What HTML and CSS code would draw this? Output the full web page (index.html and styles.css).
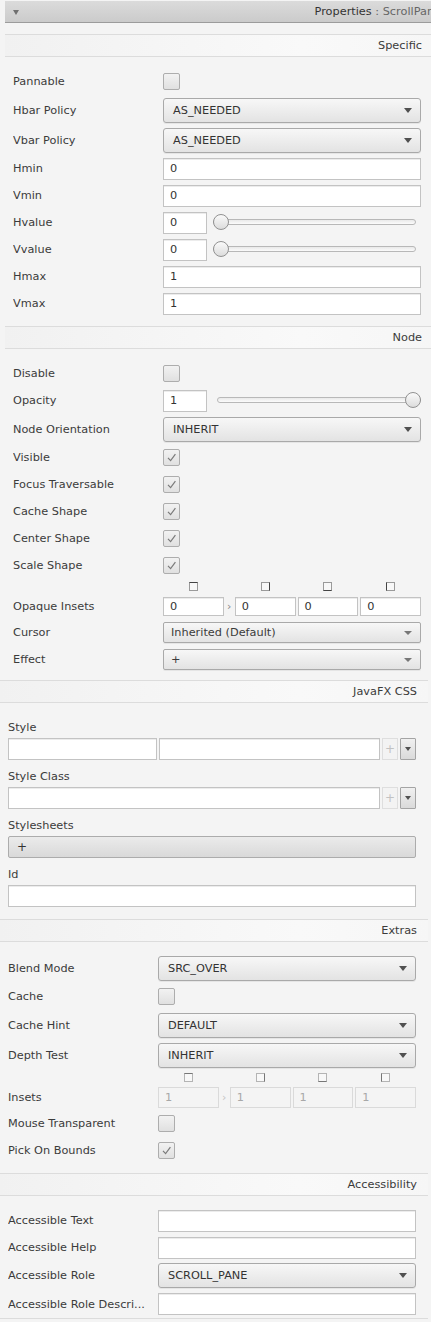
FILE: index.html
```html
<!DOCTYPE html>
<html>
<head>
<meta charset="utf-8">
<title>Properties</title>
<link rel="stylesheet" href="styles.css">
</head>
<body>
<div class="titlebar">
  <span class="tri"></span>
  <span class="title"><span class="t1">Properties</span><span class="t2"> : ScrollPane</span></span>
</div>

<div class="group g1">
  <div class="sec-head">Specific</div>
  <div class="sec-body specific">
    <div class="row h27"><span class="lbl">Pannable</span><span class="val"><span class="cb"></span></span></div>
    <div class="row h30"><span class="lbl">Hbar Policy</span><span class="val"><span class="combo">AS_NEEDED<span class="arrow"></span></span></span></div>
    <div class="row h30"><span class="lbl">Vbar Policy</span><span class="val"><span class="combo">AS_NEEDED<span class="arrow"></span></span></span></div>
    <div class="row h27"><span class="lbl">Hmin</span><span class="val"><span class="field">0</span></span></div>
    <div class="row h27"><span class="lbl">Vmin</span><span class="val"><span class="field">0</span></span></div>
    <div class="row h27"><span class="lbl">Hvalue</span><span class="val"><span class="field small">0</span><span class="slider min"><span class="track"></span><span class="thumb"></span></span></span></div>
    <div class="row h27"><span class="lbl">Vvalue</span><span class="val"><span class="field small">0</span><span class="slider min"><span class="track"></span><span class="thumb"></span></span></span></div>
    <div class="row h27"><span class="lbl">Hmax</span><span class="val"><span class="field">1</span></span></div>
    <div class="row h27"><span class="lbl">Vmax</span><span class="val"><span class="field">1</span></span></div>
  </div>

  <div class="sec-head">Node</div>
  <div class="sec-body node">
    <div class="row h27"><span class="lbl">Disable</span><span class="val"><span class="cb"></span></span></div>
    <div class="row h27"><span class="lbl">Opacity</span><span class="val"><span class="field small">1</span><span class="slider max"><span class="track"></span><span class="thumb"></span></span></span></div>
    <div class="row h30"><span class="lbl">Node Orientation</span><span class="val"><span class="combo">INHERIT<span class="arrow"></span></span></span></div>
    <div class="row h27"><span class="lbl">Visible</span><span class="val"><span class="cb checked"><svg viewBox="0 0 17 17" width="17" height="17"><path d="M5 8.8 L7.6 11.6 L12.4 5.2" fill="none" stroke="#7a7a7a" stroke-width="1.2"/></svg></span></span></div>
    <div class="row h27"><span class="lbl">Focus Traversable</span><span class="val"><span class="cb checked"><svg viewBox="0 0 17 17" width="17" height="17"><path d="M5 8.8 L7.6 11.6 L12.4 5.2" fill="none" stroke="#7a7a7a" stroke-width="1.2"/></svg></span></span></div>
    <div class="row h27"><span class="lbl">Cache Shape</span><span class="val"><span class="cb checked"><svg viewBox="0 0 17 17" width="17" height="17"><path d="M5 8.8 L7.6 11.6 L12.4 5.2" fill="none" stroke="#7a7a7a" stroke-width="1.2"/></svg></span></span></div>
    <div class="row h27"><span class="lbl">Center Shape</span><span class="val"><span class="cb checked"><svg viewBox="0 0 17 17" width="17" height="17"><path d="M5 8.8 L7.6 11.6 L12.4 5.2" fill="none" stroke="#7a7a7a" stroke-width="1.2"/></svg></span></span></div>
    <div class="row h27"><span class="lbl">Scale Shape</span><span class="val"><span class="cb checked"><svg viewBox="0 0 17 17" width="17" height="17"><path d="M5 8.8 L7.6 11.6 L12.4 5.2" fill="none" stroke="#7a7a7a" stroke-width="1.2"/></svg></span></span></div>
    <div class="row h14"><span class="lbl"></span><span class="val insets">
      <span class="cell"><span class="ico top"></span></span><span class="sep"></span>
      <span class="cell"><span class="ico right"></span></span><span class="gap"></span>
      <span class="cell"><span class="ico bottom"></span></span><span class="gap"></span>
      <span class="cell"><span class="ico left"></span></span>
    </span></div>
    <div class="row h26"><span class="lbl">Opaque Insets</span><span class="val insets">
      <span class="cell"><span class="field ins">0</span></span><span class="sep">›</span>
      <span class="cell"><span class="field ins">0</span></span><span class="gap"></span>
      <span class="cell"><span class="field ins">0</span></span><span class="gap"></span>
      <span class="cell"><span class="field ins">0</span></span>
    </span></div>
    <div class="row h27"><span class="lbl">Cursor</span><span class="val"><span class="combo slim">Inherited (Default)<span class="arrow light"></span></span></span></div>
    <div class="row h27"><span class="lbl">Effect</span><span class="val"><span class="combo slim">+<span class="arrow light"></span></span></span></div>
  </div>
</div>

<div class="group g2">
  <div class="sec-head">JavaFX CSS</div>
  <div class="sec-body css">
    <div class="blk">
      <div class="blbl">Style</div>
      <div class="brow"><span class="field w148"></span><span class="field grow"></span><span class="plus">+</span><span class="drop"><span class="arrow"></span></span></div>
    </div>
    <div class="blk">
      <div class="blbl">Style Class</div>
      <div class="brow"><span class="field grow"></span><span class="plus">+</span><span class="drop"><span class="arrow"></span></span></div>
    </div>
    <div class="blk">
      <div class="blbl">Stylesheets</div>
      <div class="brow"><span class="btn">+</span></div>
    </div>
    <div class="blk">
      <div class="blbl">Id</div>
      <div class="brow"><span class="field grow"></span></div>
    </div>
  </div>

  <div class="sec-head">Extras</div>
  <div class="sec-body extras">
    <div class="row h30"><span class="lbl">Blend Mode</span><span class="val"><span class="combo">SRC_OVER<span class="arrow"></span></span></span></div>
    <div class="row h27"><span class="lbl">Cache</span><span class="val"><span class="cb"></span></span></div>
    <div class="row h30"><span class="lbl">Cache Hint</span><span class="val"><span class="combo">DEFAULT<span class="arrow"></span></span></span></div>
    <div class="row h30"><span class="lbl">Depth Test</span><span class="val"><span class="combo">INHERIT<span class="arrow"></span></span></span></div>
    <div class="row h14"><span class="lbl"></span><span class="val insets">
      <span class="cell"><span class="ico top dim"></span></span><span class="sep"></span>
      <span class="cell"><span class="ico right dim"></span></span><span class="gap"></span>
      <span class="cell"><span class="ico bottom dim"></span></span><span class="gap"></span>
      <span class="cell"><span class="ico left dim"></span></span>
    </span></div>
    <div class="row h26"><span class="lbl">Insets</span><span class="val insets">
      <span class="cell"><span class="field ins dis">1</span></span><span class="sep dim">›</span>
      <span class="cell"><span class="field ins dis">1</span></span><span class="gap"></span>
      <span class="cell"><span class="field ins dis">1</span></span><span class="gap"></span>
      <span class="cell"><span class="field ins dis">1</span></span>
    </span></div>
    <div class="row h27"><span class="lbl">Mouse Transparent</span><span class="val"><span class="cb"></span></span></div>
    <div class="row h27"><span class="lbl">Pick On Bounds</span><span class="val"><span class="cb checked"><svg viewBox="0 0 17 17" width="17" height="17"><path d="M5 8.8 L7.6 11.6 L12.4 5.2" fill="none" stroke="#7a7a7a" stroke-width="1.2"/></svg></span></span></div>
  </div>

  <div class="sec-head">Accessibility</div>
  <div class="sec-body access">
    <div class="row h27"><span class="lbl">Accessible Text</span><span class="val"><span class="field"></span></span></div>
    <div class="row h27"><span class="lbl">Accessible Help</span><span class="val"><span class="field"></span></span></div>
    <div class="row h29"><span class="lbl">Accessible Role</span><span class="val"><span class="combo">SCROLL_PANE<span class="arrow"></span></span></span></div>
    <div class="row h28"><span class="lbl">Accessible Role Descri...</span><span class="val"><span class="field"></span></span></div>
  </div>
  <div class="sec-end"></div>
</div>
</body>
</html>
```

FILE: styles.css
```css
html, body {
  margin: 0;
  padding: 0;
}
body {
  width: 431px;
  height: 1322px;
  overflow: hidden;
  background: #f4f4f4;
  font-family: "DejaVu Sans", "Noto Sans", sans-serif;
  font-size: 11.3px;
  color: #3b3b3b;
}

/* title bar */
.titlebar {
  display: flex;
  align-items: center;
  height: 21px;
  margin: 1px 0 0 5px;
  background: linear-gradient(#dbdbdb, #cbcbcb);
  border-bottom: 1px solid #9c9c9c;
  overflow: hidden;
  white-space: nowrap;
}
.tri {
  width: 0;
  height: 0;
  border-left: 3.5px solid transparent;
  border-right: 3.5px solid transparent;
  border-top: 5px solid #707070;
  margin-left: 8px;
  margin-top: 1px;
}
.title {
  margin-left: auto;
  flex-shrink: 0;
  margin-right: -10px;
}
.t1 { color: #333; }
.t2 { color: #666; }

/* groups */
.group { }
.g1 {
  margin-left: 5px;
  margin-top: 11px;
}
.g2 {
  width: 428px;
}

.sec-head {
  height: 21px;
  line-height: 21px;
  border-top: 1px solid #dcdcdc;
  border-bottom: 1px solid #dcdcdc;
  background: linear-gradient(to right, #f1f1f1, #f9f9f9 70%, #f6f6f6);
  text-align: right;
  color: #3b3b3b;
  white-space: nowrap;
}
.g1 .sec-head { padding-right: 9px; }
.g2 .sec-head { padding-right: 11px; }

.sec-body {
  display: flex;
  flex-direction: column;
}
.specific { padding: 11px 0 9px; }
.node { padding: 11px 0 7px; }
.css { padding: 18px 0 12px; }
.extras { padding: 11px 0 9px; }
.access { padding: 11px 0 0; }
.sec-end {
  border-top: 1px solid #dcdcdc;
}

.g1 .row { padding: 0 10px 0 8px; }
.g2 .row { padding: 0 12px 0 8px; }

.row {
  display: flex;
  align-items: center;
}
.h14 { height: 14px; }
.h26 { height: 26px; }
.h27 { height: 27px; }
.h28 { height: 28px; }
.h29 { height: 29px; }
.h30 { height: 30px; }

.lbl {
  width: 150px;
  flex-shrink: 0;
  white-space: nowrap;
  overflow: hidden;
}
.val {
  flex: 1;
  display: flex;
  align-items: center;
  min-width: 0;
}

/* checkbox */
.cb {
  box-sizing: border-box;
  width: 17px;
  height: 17px;
  border: 1px solid #adadad;
  border-radius: 2px;
  background: linear-gradient(#f2f2f2, #e0e0e0);
  display: flex;
  align-items: center;
  justify-content: center;
}
.cb svg {
  display: block;
  flex-shrink: 0;
  margin: -1px;
}

/* combo */
.combo {
  box-sizing: border-box;
  flex: 1;
  height: 25px;
  display: flex;
  align-items: center;
  padding-left: 9px;
  border: 1px solid #a9a9a9;
  border-radius: 3px;
  background: linear-gradient(#f7f7f7, #e3e3e3);
  box-shadow: 0 1px 0 rgba(0,0,0,0.06);
  color: #333;
  white-space: nowrap;
}
.combo.slim {
  height: 21px;
  border-radius: 2px;
  padding-left: 7px;
  color: #3b3b3b;
}
.arrow {
  width: 0;
  height: 0;
  border-left: 4.5px solid transparent;
  border-right: 4.5px solid transparent;
  border-top: 5px solid #505050;
  margin-left: auto;
  margin-right: 8px;
}
.arrow.light {
  border-left-width: 4px;
  border-right-width: 4px;
  border-top: 4px solid #777;
}

/* text fields */
.field {
  box-sizing: border-box;
  flex: 1;
  height: 22px;
  display: flex;
  align-items: center;
  padding-left: 6px;
  border: 1px solid #c3c3c3;
  background: #fff;
  box-shadow: inset 0 1px 0 #ececec;
  color: #333;
}
.field.small {
  flex: 0 0 44px;
}
.field.ins {
  height: 19px;
  width: 100%;
}
.field.dis {
  height: 21px;
  background: #f4f4f4;
  border-color: #dadada;
  box-shadow: none;
  color: #a8a8a8;
}

/* slider */
.slider {
  position: relative;
  flex: 1;
  height: 17px;
  margin-left: 6px;
}
.track {
  position: absolute;
  top: 5px;
  height: 6px;
  box-sizing: border-box;
  border: 1px solid #b8b8b8;
  border-radius: 3px;
  background: linear-gradient(#e9e9e9, #fbfbfb);
}
.thumb {
  position: absolute;
  top: 0;
  width: 16px;
  height: 16px;
  box-sizing: border-box;
  border: 1px solid #919191;
  border-radius: 50%;
  background: linear-gradient(#fafafa, #dcdcdc);
}
.slider.min .track { left: 0; right: 5px; }
.slider.min .thumb { left: 0; }
.slider.max .track { left: 4px; right: 0; }
.slider.max .thumb { right: 0; }

/* insets */
.insets { align-self: stretch; align-items: center; }
.cell {
  flex: 1;
  display: flex;
  justify-content: center;
  align-items: center;
}
.sep {
  flex: 0 0 11px;
  text-align: center;
  color: #888;
  font-size: 11px;
}
.sep.dim { color: #c4c4c4; }
.gap { flex: 0 0 2px; }
.ico {
  box-sizing: border-box;
  width: 9px;
  height: 9px;
  border: 1px solid #9a9a9a;
  background: #f8f8f8;
}
.ico.top { border-top-color: #444; }
.ico.right { border-right-color: #444; border-right-width: 1.5px; }
.ico.bottom { border-bottom-color: #444; border-bottom-width: 1.5px; }
.ico.left { border-left-color: #444; }
.ico.dim { border-color: #b4b4b4; }
.ico.dim.top { border-top-color: #777; }
.ico.dim.right { border-right-color: #777; }
.ico.dim.bottom { border-bottom-color: #777; }
.ico.dim.left { border-left-color: #777; }

/* css blocks */
.css {
  padding-left: 8px;
  padding-right: 12px;
  gap: 10px;
}
.blbl {
  height: 14px;
  line-height: 14px;
  margin-bottom: 3px;
  white-space: nowrap;
}
.brow {
  display: flex;
  align-items: center;
  height: 22px;
}
.field.w148 {
  flex: 0 0 149px;
  margin-right: 2px;
}
.field.grow { flex: 1; }
.plus {
  box-sizing: border-box;
  flex: 0 0 16px;
  height: 22px;
  margin-left: 2px;
  border: 1px solid #dedede;
  background: #f3f3f3;
  color: #c2c2c2;
  display: flex;
  align-items: center;
  justify-content: center;
  font-size: 12px;
}
.drop {
  box-sizing: border-box;
  flex: 0 0 16px;
  height: 22px;
  margin-left: 2px;
  border: 1px solid #a4a4a4;
  border-radius: 1px;
  background: linear-gradient(#f0f0f0, #dadada);
  display: flex;
  align-items: center;
  justify-content: center;
}
.drop .arrow {
  margin: 0;
  border-left-width: 3.5px;
  border-right-width: 3.5px;
  border-top-width: 4px;
}
.btn {
  box-sizing: border-box;
  flex: 1;
  height: 22px;
  display: flex;
  align-items: center;
  padding-left: 8px;
  border: 1px solid #acacac;
  border-radius: 2px;
  background: linear-gradient(#ebebeb, #d9d9d9);
  color: #333;
  font-size: 12px;
}
```
